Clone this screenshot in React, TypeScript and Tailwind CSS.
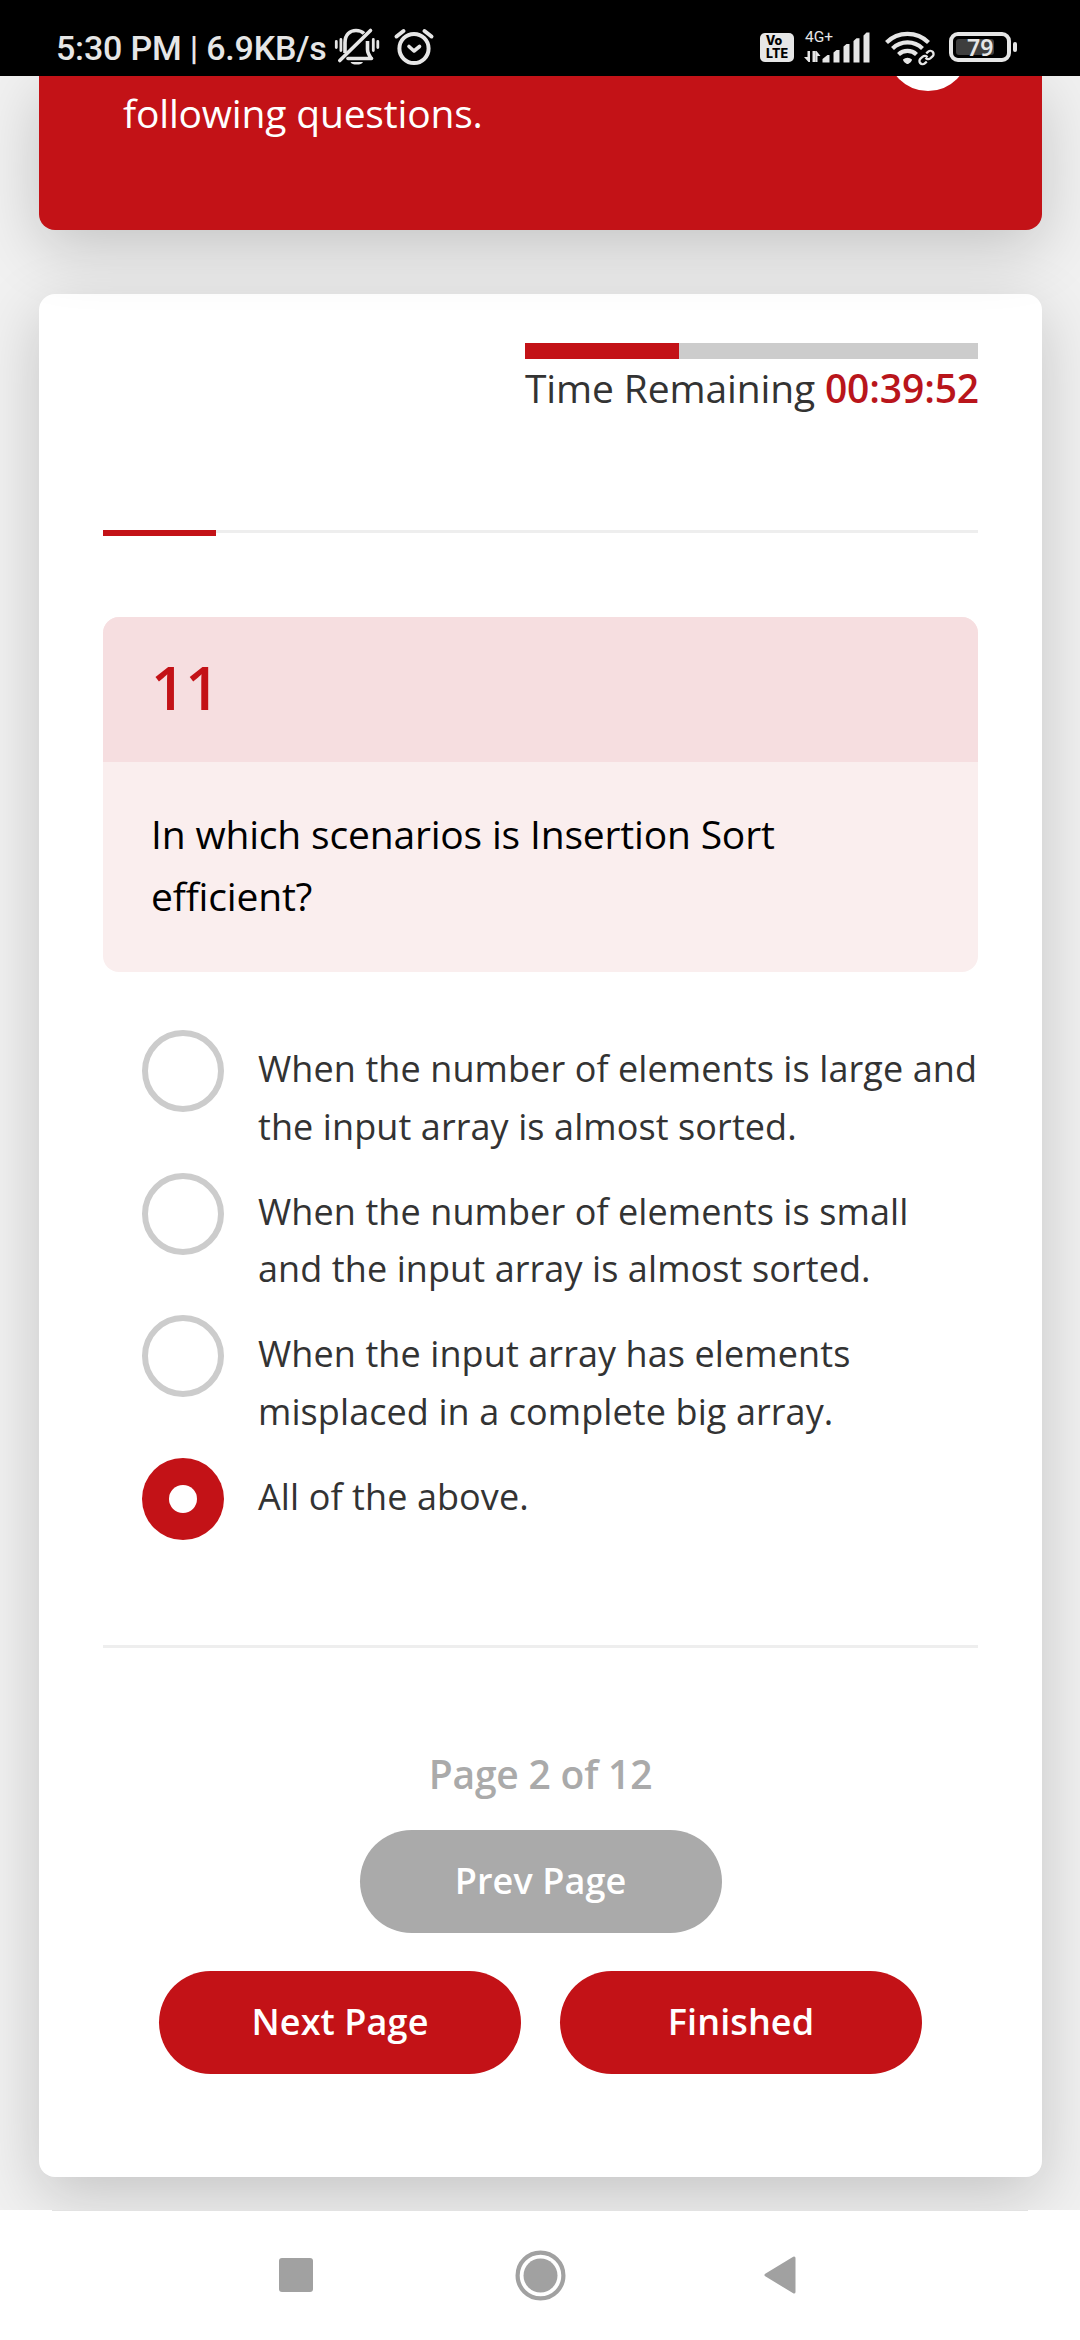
import React from "react";

const options = [
  { lines: ["When the number of elements is large and", "the input array is almost sorted."], checked: false },
  { lines: ["When the number of elements is small", "and the input array is almost sorted."], checked: false },
  { lines: ["When the input array has elements", "misplaced in a complete big array."], checked: false },
  { lines: ["All of the above."], checked: true },
];

function MutedBell() {
  return (
    <svg className="h-[40px] w-[46px]" viewBox="0 0 46 40" fill="none" stroke="#e6e6e6" strokeWidth="3.6">
      <path d="M11 26V15.500C11 7.500 16 3.500 22 3.500c3.600 0 6 1 8 3" />
      <path d="M5.800 33.500 36.500 3.500" strokeLinecap="round" />
      <path d="M14 31.500H37.500" strokeLinecap="round" />
      <path d="M33.500 14v8.500c0 3 .8 4.800 3.800 9" />
      <path d="M16.500 35h12.500a6.500 3.600 0 0 1-12.500 0z" fill="#e6e6e6" stroke="none" />
      <path d="M2.300 14.500v6M6.900 12.500v11M39.300 12.500v11M43.800 14.500v6" strokeWidth="2.800" strokeLinecap="round" />
    </svg>
  );
}

function Alarm() {
  return (
    <svg className="h-[40px] w-[42px]" viewBox="0 0 42 40" fill="none" stroke="#e6e6e6" strokeLinecap="round" strokeLinejoin="round">
      <circle cx="21" cy="21.500" r="14.600" strokeWidth="4" />
      <path d="M3.500 9.500 10.500 4M38.500 9.500 31.500 4" strokeWidth="4" />
      <path d="m16 19.500 5 4.500 5.500-4.500" strokeWidth="3.600" />
    </svg>
  );
}

function Signal() {
  return (
    <svg className="h-[40px] w-[72px]" viewBox="0 0 72 40" fill="#e6e6e6">
      <text x="3" y="14.800" fontFamily="Roboto" fontSize="15.500">4G+</text>
      <path d="M5.500 24h2.500v11H6.500L2 30h3.500zM10.500 24h2.500v11h-2.500zM14.500 24l4 5h-3v6h-2.300V24z" />
      <path d="M20.500 35.500V32l5-4h2v7.500zM31.500 35.500V25.500l3-2.500h3v12.500zM41.500 35.500V19.500l3-2.500h3v18.500zM51.500 35.500V14l3-2.800h3v24.300zM61.500 35.500V8.500l3-3h3v30z" />
    </svg>
  );
}

function Wifi() {
  return (
    <svg className="h-[40px] w-[52px]" viewBox="0 0 52 40" fill="none" stroke="#e6e6e6" strokeWidth="4.200">
      <path d="M2.500 15.500a30 30 0 0 1 42 0" />
      <path d="M8.500 21.500a21.500 21.500 0 0 1 30 0" />
      <path d="M14.500 27.500a13 13 0 0 1 18 0" />
      <path d="M19 32.500a6.500 6.500 0 0 1 9 0c0 2-3 4.500-4.500 4.500S19 34.500 19 32.500z" fill="#e6e6e6" stroke="none" />
      <g transform="translate(42.500 30.500) rotate(-42)">
        <rect x="-10" y="-4.200" width="10.500" height="8.400" rx="4.200" stroke="#000" strokeWidth="5" />
        <rect x="-1" y="-4.200" width="10.500" height="8.400" rx="4.200" stroke="#000" strokeWidth="5" />
        <path d="M-2.500 3.200H-5.200a3.200 3.200 0 0 1 0-6.400H-2.200a3.200 3.200 0 0 1 3 3.600M2.500-3.200H5.200a3.200 3.200 0 0 1 0 6.400H2.200a3.200 3.200 0 0 1-3-3.600" strokeWidth="2.300" />
      </g>
    </svg>
  );
}

function StatusBar() {
  return (
    <div className="relative z-20 flex h-[76px] shrink-0 bg-black pl-[56px] text-[#e6e6e6]">
      <span className="w-[278px] whitespace-nowrap pt-[28px] font-[Roboto] text-[34px] leading-[40px] font-medium tracking-[-0.2px]">5:30 PM | 6.9KB/s</span>
      <div className="flex gap-[13px] pt-[27px]">
        <MutedBell />
        <Alarm />
      </div>
      <div className="ml-auto flex w-[320px] pt-[27px]">
        <div className="mt-[6px] h-[29px] w-[34px] rounded-[5px] bg-[#e6e6e6] pt-px text-center font-[Inter] text-[12.500px] leading-[13px] font-extrabold text-black">
          <div className="pr-[6px]">Vo</div>
          <div>LTE</div>
        </div>
        <div className="ml-[8px]"><Signal /></div>
        <div className="ml-[10px]"><Wifi /></div>
        <div className="mt-[5px] ml-[13px] h-[30px] w-[62px] rounded-[9px] border-4 border-[#e6e6e6] p-[3px]">
          <div className="h-[16px] w-[38px] rounded-[3px] bg-[#3e3e3e] pl-[11px] font-['Noto_Sans'] text-[23px] leading-[17px] font-semibold">79</div>
        </div>
        <div className="mt-[15px] ml-[2px] h-[10px] w-[4px] rounded-[2px] bg-[#e6e6e6]" />
      </div>
    </div>
  );
}

function Radio({ checked }: { checked: boolean }) {
  return checked ? (
    <span className="flex size-[82px] shrink-0 items-center justify-center rounded-full bg-[#c31217]">
      <span className="size-[28px] rounded-full bg-white" />
    </span>
  ) : (
    <span className="size-[82px] shrink-0 rounded-full border-6 border-[#cccccc]" />
  );
}

function Pill({ label, tone }: { label: string; tone: string }) {
  return (
    <button className={`h-[103px] w-[362px] rounded-full text-[36px] leading-[54px] font-semibold tracking-[0.1px] text-white ${tone}`}>{label}</button>
  );
}

export default function App() {
  return (
    <div className="flex h-[2340px] w-[1080px] flex-col overflow-hidden bg-[#f1f1f1] font-['Open_Sans',sans-serif] text-[#333333]">
      <StatusBar />
      <main className="flex h-[2134px] shrink-0 flex-col px-[39px]">
        <section className="relative z-10 h-[154px] w-[1003px] shrink-0 rounded-b-[16px] bg-[#c31217] pt-[6px] pl-[84px] text-[39px] leading-[62px] tracking-[-0.18px] text-white shadow-[0_18px_64px_rgba(0,0,0,0.19)]">
          following questions.
          <span className="absolute -top-[67px] left-[848px] size-[82px] rounded-full bg-white" />
        </section>
        <section className="mt-[64px] flex h-[1883px] w-[1003px] shrink-0 flex-col rounded-[16px] bg-white px-[64px] shadow-[0_18px_64px_rgba(0,0,0,0.19)]">
          <div className="mt-[49px] flex h-[187px] w-[453px] flex-col self-end">
            <div className="h-[16px] bg-[#cccccc]">
              <div className="h-full w-[154px] bg-[#c31217]" />
            </div>
            <p className="text-[39px] leading-[58px] tracking-[-0.14px] whitespace-nowrap">
              Time Remaining <b className="font-semibold text-[#b9151b]">00:39:52</b>
            </p>
          </div>
          <div className="h-[6px] shrink-0">
            <div className="h-[3px] bg-[#eeeeee]">
              <div className="h-[6px] w-[113px] bg-[#c31217]" />
            </div>
          </div>
          <div className="mt-[81px] h-[355px] shrink-0 overflow-hidden rounded-[16px] bg-[#faeeee]">
            <div className="h-[145px] bg-[#f6dee0] pt-[28px] pl-[48px] text-[60px] leading-[84px] font-semibold text-[#c31217]">11</div>
            <p className="pt-[41px] pl-[48px] text-[39px] leading-[62px] tracking-[-0.18px] text-black">
              In which scenarios is Insertion Sort
              <br />
              efficient?
            </p>
          </div>
          <div className="mt-[58px] flex flex-col gap-[23.500px] pl-[39px]">
            {options.map((option) => (
              <label key={option.lines[0]} className="flex gap-[34px]">
                <Radio checked={option.checked} />
                <span className="-mb-[6px] pt-[10px] text-[36px] leading-[57.600px] tracking-[0.09px] whitespace-nowrap">
                  {option.lines.map((line) => (
                    <span key={line} className="block">{line}</span>
                  ))}
                </span>
              </label>
            ))}
          </div>
          <div className="mt-[104.900px] h-[3px] shrink-0 bg-[#eeeeee]" />
          <p className="mt-[97px] h-[85px] shrink-0 text-center text-[39px] leading-[58px] font-semibold tracking-[-0.2px] text-[#aaaaaa]">Page 2 of 12</p>
          <div className="flex justify-center">
            <Pill label="Prev Page" tone="bg-[#aaaaaa]" />
          </div>
          <div className="mt-[38px] flex justify-center gap-[39px]">
            <Pill label="Next Page" tone="bg-[#c31217]" />
            <Pill label="Finished" tone="bg-[#c31217]" />
          </div>
        </section>
      </main>
      <nav className="relative z-20 h-[130px] shrink-0 bg-white">
        <div className="mx-[52px] h-px bg-[#e2e2e2]" />
        <div className="flex h-[128px] items-center pl-[279px]">
          <div className="size-[34px] rounded-[3px] bg-[#a1a1a1]" />
          <svg className="ml-[202px] size-[51px]" viewBox="0 0 51 51" fill="#a1a1a1">
            <circle cx="25.500" cy="25.500" r="22.900" fill="none" stroke="#a1a1a1" strokeWidth="4.200" />
            <circle cx="25.500" cy="25.500" r="17" />
          </svg>
          <svg className="ml-[197px] h-[40px] w-[34px]" viewBox="0 0 34 40" fill="#a1a1a1" stroke="#a1a1a1" strokeWidth="3" strokeLinejoin="round">
            <path d="M3 20 31 3v34z" />
          </svg>
        </div>
      </nav>
    </div>
  );
}
